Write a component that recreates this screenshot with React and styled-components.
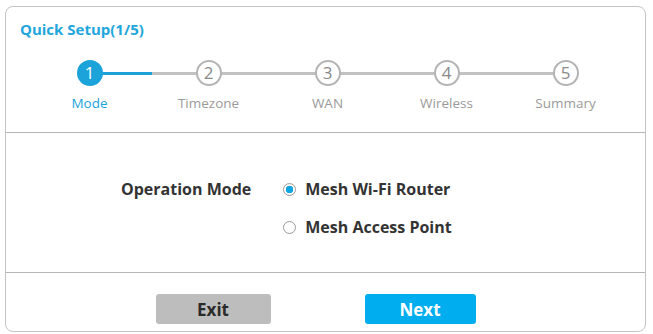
import React from "react";
import styled, { createGlobalStyle } from "styled-components";

const steps = ["Mode", "Timezone", "WAN", "Wireless", "Summary"];
const current = 0;

const App = () => {
  return (
    <>
      <GlobalStyle />
      <Panel>
        <Header>
          <Title>Quick Setup(1/5)</Title>
          <Stepper>
            {steps.map((label, i) => (
              <Step
                key={label}
                $last={i === steps.length - 1}
                $half={i === current}
              >
                <Circle $active={i === current}>{i + 1}</Circle>
                <StepLabel $active={i === current}>{label}</StepLabel>
              </Step>
            ))}
          </Stepper>
        </Header>

        <Body>
          <ModeRow>
            <FieldLabel>Operation Mode</FieldLabel>
            <Options>
              <Option>
                <Radio $checked />
                Mesh Wi-Fi Router
              </Option>
              <Option>
                <Radio />
                Mesh Access Point
              </Option>
            </Options>
          </ModeRow>
        </Body>

        <Footer>
          <Button>Exit</Button>
          <Button $primary>Next</Button>
        </Footer>
      </Panel>
    </>
  );
};

const GlobalStyle = createGlobalStyle`
  body {
    margin: 0;
    background: #ffffff;
    font-family: "Open Sans", "Liberation Sans", sans-serif;
  }
`;

const Panel = styled.div`
  box-sizing: border-box;
  width: 641px;
  height: 326px;
  margin: 6px 0 0 5px;
  border: 1px solid #c4c4c4;
  border-radius: 8px;
  display: flex;
  flex-direction: column;
`;

const Header = styled.div`
  height: 126px;
  border-bottom: 1px solid #b5b5b5;
  padding: 12px 0 0 14px;
  box-sizing: border-box;
`;

const Title = styled.div`
  color: #1fa6dc;
  font-weight: 700;
  font-size: 15px;
  line-height: 20px;
`;

const Stepper = styled.div`
  display: grid;
  grid-template-columns: repeat(5, 119px);
  margin: 21px 0 0 10px;
`;

const Step = styled.div`
  position: relative;
  display: flex;
  flex-direction: column;
  align-items: center;

  &::after {
    content: "";
    display: ${(p) => (p.$last ? "none" : "block")};
    position: absolute;
    top: 12px;
    left: 50%;
    width: 119px;
    height: 3px;
    background: ${(p) =>
      p.$half
        ? "linear-gradient(to right, #1ba3da 0 52%, #c2c2c2 52% 100%)"
        : "#c2c2c2"};
  }
`;

const Circle = styled.div`
  position: relative;
  z-index: 1;
  box-sizing: border-box;
  width: 26px;
  height: 26px;
  border-radius: 50%;
  border: 2px solid ${(p) => (p.$active ? "#1ba3da" : "#b4b4b4")};
  background: ${(p) => (p.$active ? "#1ba3da" : "#ffffff")};
  color: ${(p) => (p.$active ? "#ffffff" : "#8a8a8a")};
  font-size: 17px;
  line-height: 22px;
  text-align: center;
`;

const StepLabel = styled.div`
  margin-top: 8px;
  font-size: 13.5px;
  color: ${(p) => (p.$active ? "#1ba3da" : "#9a9a9a")};
`;

const Body = styled.div`
  height: 140px;
  border-bottom: 1px solid #b5b5b5;
  box-sizing: border-box;
  padding: 45px 0 0 115px;
`;

const ModeRow = styled.div`
  display: flex;
  gap: 32px;
`;

const FieldLabel = styled.div`
  font-size: 16px;
  font-weight: 700;
  color: #333;
  line-height: 22px;
`;

const Options = styled.div`
  display: flex;
  flex-direction: column;
  gap: 16px;
`;

const Option = styled.div`
  display: flex;
  align-items: center;
  gap: 9px;
  font-size: 16px;
  font-weight: 700;
  color: #333;
  line-height: 22px;
`;

const Radio = styled.span`
  box-sizing: border-box;
  width: 13px;
  height: 13px;
  border-radius: 50%;
  border: 1px solid #9a9a9a;
  background: ${(p) =>
    p.$checked ? "radial-gradient(circle, #0ea5e0 0 3.5px, #fff 4px)" : "#fff"};
`;

const Footer = styled.div`
  flex: 1;
  display: flex;
  justify-content: center;
  gap: 94px;
  padding: 21px 20px 0 0;
  box-sizing: border-box;
`;

const Button = styled.button`
  width: ${(p) => (p.$primary ? "111px" : "115px")};
  height: 30px;
  border: none;
  border-radius: 3px;
  background: ${(p) => (p.$primary ? "#00aeef" : "#bdbdbd")};
  color: ${(p) => (p.$primary ? "#ffffff" : "#2a2a2a")};
  font-family: "Open Sans", "Liberation Sans", sans-serif;
  font-size: 17px;
  font-weight: 700;
  cursor: pointer;
`;

export default App;
